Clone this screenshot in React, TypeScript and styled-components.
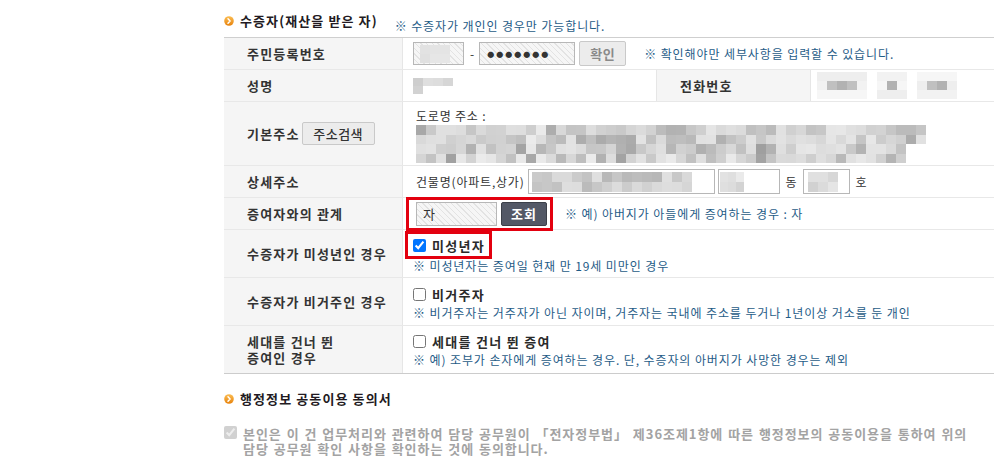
import React from 'react';
import styled, { createGlobalStyle } from 'styled-components';

const Global = createGlobalStyle`
  html, body { margin: 0; padding: 0; background: #fff; }
  body {
    font-family: "Noto Sans CJK KR", "Noto Sans", sans-serif;
    font-size: 12px;
    color: #333;
  }
  * { box-sizing: border-box; }
`;

const Page = styled.div`
  margin-left: 224px;
  width: 770px;
`;

const SectionHeader = styled.div<{ $top: number }>`
  display: flex;
  align-items: flex-start;
  height: ${(p) => p.$top + 25}px;
  padding-top: ${(p) => p.$top}px;
`;

const BulletSvg = styled.svg`
  flex: none;
  margin-top: 4px;
  display: block;
`;

const Title = styled.h2`
  margin: 0 0 0 6px;
  font-size: 13px;
  line-height: 18px;
  font-weight: 700;
  letter-spacing: 1.1px;
  color: #221a22;
  white-space: nowrap;
`;

const Note = styled.span<{ $mt?: number; $ml?: number }>`
  color: #1f5c87;
  font-size: 12px;
  line-height: 18px;
  letter-spacing: 0.9px;
  white-space: nowrap;
  margin-top: ${(p) => p.$mt ?? 0}px;
  margin-left: ${(p) => p.$ml ?? 0}px;
`;

const Table = styled.div`
  border-top: 1px solid #cfcfcf;
`;

const Row = styled.div<{ $h: number }>`
  display: flex;
  height: ${(p) => p.$h + 1}px;
  border-bottom: 1px solid #e8e8e8;
  &:last-child { border-bottom-color: #cccccc; }
`;

const Label = styled.div<{ $w?: number; $left?: boolean }>`
  flex: none;
  width: ${(p) => p.$w ?? 179}px;
  background: #f5f5f5;
  border-right: 1px solid #e6e6e6;
  ${(p) => (p.$left ? 'border-left: 1px solid #e6e6e6;' : '')}
  padding-left: 23px;
  display: flex;
  align-items: center;
  font-size: 13px;
  font-weight: 700;
  letter-spacing: 1.2px;
  color: #333;
  line-height: 16px;
  white-space: nowrap;
`;

const Value = styled.div<{ $pl?: number; $w?: number }>`
  ${(p) => (p.$w ? `flex: none; width: ${p.$w}px;` : 'flex: 1;')}
  padding-left: ${(p) => p.$pl ?? 10}px;
  display: flex;
  align-items: center;
  min-width: 0;
  white-space: nowrap;
`;

const StackValue = styled.div<{ $pt: number; $pl?: number }>`
  flex: 1;
  padding-left: ${(p) => p.$pl ?? 10}px;
  padding-top: ${(p) => p.$pt}px;
  display: flex;
  flex-direction: column;
  align-items: flex-start;
  white-space: nowrap;
`;

const Field = styled.div<{ $w: number; $h?: number; $hatch?: boolean; $pl?: number; $ml?: number }>`
  flex: none;
  width: ${(p) => p.$w}px;
  height: ${(p) => p.$h ?? 23}px;
  margin-left: ${(p) => p.$ml ?? 0}px;
  border: 1px solid #b7b7b7;
  padding-left: ${(p) => p.$pl ?? 4}px;
  display: flex;
  align-items: center;
  font-size: 13px;
  color: #333;
  background: ${(p) =>
    p.$hatch
      ? 'repeating-linear-gradient(45deg, #f6f6f6 0px, #f6f6f6 3px, #e3e3e3 3px, #e3e3e3 4px)'
      : '#fff'};
`;

const Dots = styled.span`
  font-size: 7px;
  letter-spacing: 2px;
  color: #333;
`;

const Text = styled.span<{ $ml?: number }>`
  margin-left: ${(p) => p.$ml ?? 0}px;
  font-size: 12px;
  letter-spacing: 0.8px;
  color: #333;
  line-height: 17px;
`;

const GrayButton = styled.button<{ $w: number; $h: number; $ml?: number; $muted?: boolean }>`
  flex: none;
  width: ${(p) => p.$w}px;
  height: ${(p) => p.$h}px;
  margin-left: ${(p) => p.$ml ?? 0}px;
  padding: 0;
  border: 1px solid #c9c9c9;
  border-radius: 2px;
  background: #ececec;
  font-family: inherit;
  font-size: 13px;
  letter-spacing: 0.5px;
  font-weight: ${(p) => (p.$muted ? 700 : 500)};
  color: ${(p) => (p.$muted ? '#8a8a8a' : '#333')};
`;

const DarkButton = styled.button`
  flex: none;
  width: 46px;
  height: 24px;
  margin-left: 4px;
  padding: 0;
  border: 1px solid #3c4049;
  border-radius: 2px;
  background: #535866;
  color: #fff;
  font-family: inherit;
  font-size: 13px;
  letter-spacing: 1px;
  font-weight: 700;
`;

const RedBox = styled.div<{ $pl: number; $pr: number; $pv: number; $ml: number }>`
  display: flex;
  align-items: center;
  flex: none;
  margin-left: ${(p) => p.$ml}px;
  border: 3px solid #e3000f;
  padding: ${(p) => `${p.$pv}px ${p.$pr}px ${p.$pv}px ${p.$pl}px`};
`;

const CheckLine = styled.label<{ $h?: number }>`
  display: flex;
  align-items: center;
  height: ${(p) => p.$h ?? 20}px;
  font-size: 13px;
  font-weight: 700;
  letter-spacing: 1.3px;
  color: #2a2a2a;
`;

const Check = styled.input`
  width: 13px;
  height: 13px;
  margin: 0 6px 0 0;
  flex: none;
`;

const Agreement = styled.div`
  display: flex;
  align-items: flex-start;
  margin-top: 11px;
`;

const AgreeText = styled.p`
  margin: 0;
  font-size: 13px;
  font-weight: 700;
  line-height: 15px;
  letter-spacing: 0.95px;
  word-spacing: 1px;
  color: #a3a3a3;
  white-space: nowrap;
`;

const DashSep = styled.span`
  margin: 0 5px 0 6px;
  color: #333;
  font-size: 12px;
`;

const MosaicSvg = styled.svg<{ $ml?: number; $mt?: number }>`
  display: block;
  flex: none;
  margin-left: ${(p) => p.$ml ?? 0}px;
  margin-top: ${(p) => p.$mt ?? 0}px;
`;

const Bullet = ({ id }: { id: string }) => (
  <BulletSvg width="10" height="10" viewBox="0 0 10 10">
    <defs>
      <linearGradient id={id} x1="0" y1="0" x2="0" y2="1">
        <stop offset="0" stopColor="#fbbd52" />
        <stop offset="1" stopColor="#e7820c" />
      </linearGradient>
    </defs>
    <circle cx="5" cy="5" r="4.8" fill={`url(#${id})`} />
    <path d="M4 2.8 L6.1 5 L4 7.2" stroke="#fff" strokeWidth="1.5" fill="none" strokeLinecap="round" strokeLinejoin="round" />
  </BulletSvg>
);

const Mosaic = ({
  rows,
  cw = 10,
  ch = 10,
  seed,
  bias = 0,
  spread = 70,
  ml,
  mt,
}: {
  rows: number[];
  cw?: number;
  ch?: number;
  seed: number;
  bias?: number;
  spread?: number;
  ml?: number;
  mt?: number;
}) => {
  let s = seed;
  const rnd = () => {
    s = (s * 9301 + 49297) % 233280;
    return s / 233280;
  };
  const maxCols = Math.max(...rows);
  const rects: React.ReactNode[] = [];
  rows.forEach((n, r) => {
    for (let c = 0; c < n; c++) {
      const v = Math.max(150, Math.round(248 - rnd() * rnd() * spread - bias - rnd() * 12));
      rects.push(<rect key={`${r}-${c}`} x={c * cw} y={r * ch} width={cw} height={ch} fill={`rgb(${v},${v},${v})`} />);
    }
  });
  return (
    <MosaicSvg $ml={ml} $mt={mt} width={maxCols * cw} height={rows.length * ch} shapeRendering="crispEdges">
      {rects}
    </MosaicSvg>
  );
};

const PhoneMosaic = () => {
  const groups = [
    { x: 0, w: 5 },
    { x: 6, w: 3 },
    { x: 10, w: 4 },
  ];
  const rects: React.ReactNode[] = [];
  groups.forEach((g, gi) => {
    for (let c = 0; c < g.w; c++) {
      for (let r = 0; r < 3; r++) {
        const dark = r === 1 && c > 0 && c < g.w - 1;
        const v = dark ? 178 + ((c + gi) % 2) * 14 : 238 + ((c * 3 + r + gi) % 3) * 4;
        rects.push(
          <rect key={`${gi}-${c}-${r}`} x={(g.x + c) * 10} y={r * 9} width={10} height={9} fill={`rgb(${v},${v},${v})`} />
        );
      }
    }
  });
  return (
    <MosaicSvg width={140} height={27} shapeRendering="crispEdges">
      {rects}
    </MosaicSvg>
  );
};

export default function App() {
  return (
    <Page>
      <Global />
      <SectionHeader $top={12}>
        <Bullet id="b1" />
        <Title>수증자(재산을 받은 자)</Title>
        <Note $mt={5} $ml={17}>※ 수증자가 개인인 경우만 가능합니다.</Note>
      </SectionHeader>

      <Table>
        <Row $h={31}>
          <Label>주민등록번호</Label>
          <Value>
            <Field $w={51} $hatch $pl={6}>
              <Mosaic rows={[3, 3]} cw={10} ch={9} seed={7} bias={10} spread={40} />
            </Field>
            <DashSep>-</DashSep>
            <Field $w={96} $hatch $pl={7}>
              <Dots>●●●●●●●</Dots>
            </Field>
            <GrayButton $w={47} $h={25} $ml={4} $muted>확인</GrayButton>
            <Note $ml={18}>※ 확인해야만 세부사항을 입력할 수 있습니다.</Note>
          </Value>
        </Row>

        <Row $h={31}>
          <Label>성명</Label>
          <Value $w={253}>
            <Mosaic rows={[4, 1]} cw={10} ch={8} seed={11} bias={15} spread={40} />
          </Value>
          <Label $w={155} $left>전화번호</Label>
          <Value $pl={6}>
            <PhoneMosaic />
          </Value>
        </Row>

        <Row $h={63}>
          <Label>
            기본주소
            <GrayButton $w={73} $h={23} $ml={2}>주소검색</GrayButton>
          </Label>
          <StackValue $pt={5} $pl={13}>
            <Text>도로명 주소 :</Text>
            <Mosaic rows={[51, 51, 49, 49]} cw={10} ch={9.5} seed={41} bias={12} spread={80} mt={1} />
          </StackValue>
        </Row>

        <Row $h={31}>
          <Label>상세주소</Label>
          <Value $pl={13}>
            <Text>건물명(아파트,상가)</Text>
            <Field $w={187} $h={25} $ml={3} $pl={3}>
              <Mosaic rows={[16, 16]} cw={10} ch={10} seed={5} bias={18} spread={60} />
            </Field>
            <Field $w={62} $h={25} $ml={3} $pl={1}>
              <Mosaic rows={[3, 3]} cw={8} ch={10} seed={9} bias={8} spread={40} />
            </Field>
            <Text $ml={6}>동</Text>
            <Field $w={47} $h={25} $ml={6} $pl={4}>
              <Mosaic rows={[3, 3]} cw={10} ch={10} seed={3} bias={10} spread={45} />
            </Field>
            <Text $ml={5}>호</Text>
          </Value>
        </Row>

        <Row $h={31}>
          <Label>증여자와의 관계</Label>
          <Value>
            <RedBox $ml={-7} $pl={7} $pr={3} $pv={2}>
              <Field $w={81} $h={24} $hatch $pl={6}>자</Field>
              <DarkButton>조회</DarkButton>
            </RedBox>
            <Note $ml={12}>※ 예) 아버지가 아들에게 증여하는 경우 : 자</Note>
          </Value>
        </Row>

        <Row $h={47}>
          <Label>수증자가 미성년인 경우</Label>
          <StackValue $pt={1}>
            <RedBox $ml={-8} $pl={5} $pr={4} $pv={0}>
              <CheckLine $h={22}>
                <Check type="checkbox" defaultChecked />
                미성년자
              </CheckLine>
            </RedBox>
            <Note $mt={-2}>※ 미성년자는 증여일 현재 만 19세 미만인 경우</Note>
          </StackValue>
        </Row>

        <Row $h={47}>
          <Label>수증자가 비거주인 경우</Label>
          <StackValue $pt={6}>
            <CheckLine>
              <Check type="checkbox" />
              비거주자
            </CheckLine>
            <Note>※ 비거주자는 거주자가 아닌 자이며, 거주자는 국내에 주소를 두거나 1년이상 거소를 둔 개인</Note>
          </StackValue>
        </Row>

        <Row $h={47}>
          <Label>
            세대를 건너 뛴
            <br />
            증여인 경우
          </Label>
          <StackValue $pt={5}>
            <CheckLine>
              <Check type="checkbox" />
              세대를 건너 뛴 증여
            </CheckLine>
            <Note>※ 예) 조부가 손자에게 증여하는 경우. 단, 수증자의 아버지가 사망한 경우는 제외</Note>
          </StackValue>
        </Row>
      </Table>

      <SectionHeader $top={16}>
        <Bullet id="b2" />
        <Title>행정정보 공동이용 동의서</Title>
      </SectionHeader>
      <Agreement>
        <Check type="checkbox" defaultChecked disabled />
        <AgreeText>
          본인은 이 건 업무처리와 관련하여 담당 공무원이 「전자정부법」 제36조제1항에 따른 행정정보의 공동이용을 통하여 위의
          <br />
          담당 공무원 확인 사항을 확인하는 것에 동의합니다.
        </AgreeText>
      </Agreement>
    </Page>
  );
}
